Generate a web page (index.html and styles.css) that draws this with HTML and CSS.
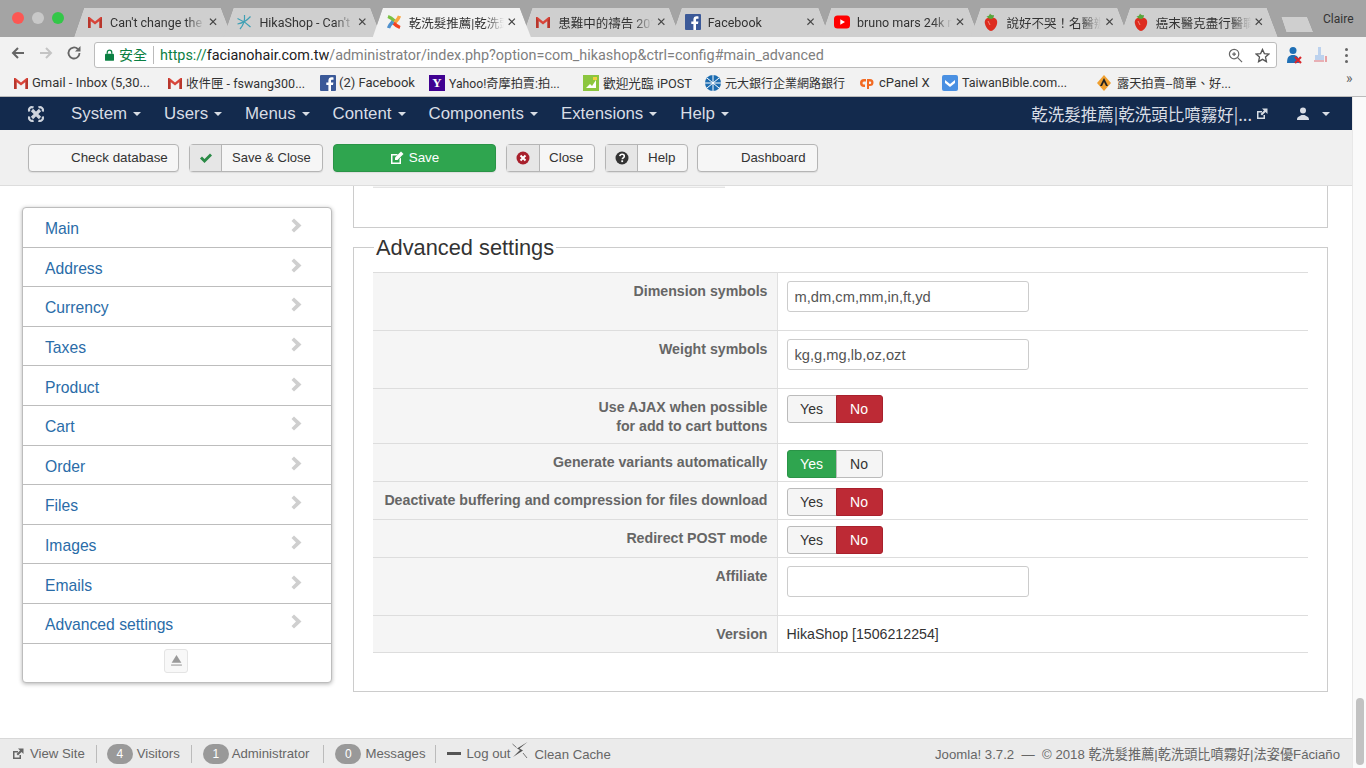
FILE: index.html
```html
<!DOCTYPE html>
<html lang="en">
<head>
<meta charset="utf-8">
<title>HikaShop configuration</title>
<link rel="stylesheet" href="styles.css">
</head>
<body>
<svg class="defs" width="0" height="0" aria-hidden="true">
  <symbol id="gmail" viewBox="0 0 16 16"><path d="M1 3h1.500L8 7.500 13.500 3H15v11h-2.500V7L8 10.500 3.500 7v7H1z" fill="#d8453a"/><path d="M3.500 7v7H1V3z" fill="#b8362c"/><path d="M12.500 7v7H15V3z" fill="#b8362c"/></symbol>
  <symbol id="hika" viewBox="0 0 16 16"><g fill="none" stroke="#3fa0b5" stroke-width="1.200"><path d="M8.500 1C9 6 7.500 11 4 15"/><path d="M1.500 4.500C5 6 10 8.500 14.500 13"/><path d="M14.500 2.500C11 6.500 7 9 1.500 10"/></g></symbol>
  <symbol id="joomla" viewBox="0 0 16 16"><g fill="none" stroke-width="3.400"><path d="M2 2.500C5 3.500 7 5.500 8.500 7" stroke="#7ac143"/><path d="M13.500 2C12.500 5 10.500 7 9 8.500" stroke="#f9a541"/><path d="M14 13.500C11 12.500 9 10.500 7.500 9" stroke="#f44321"/><path d="M2.500 14C3.500 11 5.500 9 7 7.500" stroke="#5091cd"/></g></symbol>
  <symbol id="fb" viewBox="0 0 16 16"><rect width="16" height="16" rx="1" fill="#3b5998"/><path d="M11 16V10h2l.4-2.500H11V6c0-.8.3-1.200 1.200-1.200h1.300V2.500C13 2.400 12.400 2.300 11.600 2.300 9.600 2.300 8.400 3.500 8.400 5.600v1.900H6.300V10h2.100v6z" fill="#fff"/></symbol>
  <symbol id="yt" viewBox="0 0 16 16"><rect y="1.500" width="16" height="13" rx="3.500" fill="#f00"/><path d="M6.300 5.200L11 8l-4.700 2.800z" fill="#fff"/></symbol>
  <symbol id="berry" viewBox="0 0 16 18"><path d="M8 5C12.500 4 15 7 14 11 13 15 10 18 8 18S3 15 2 11C1 7 3.500 4 8 5z" fill="#dd2c1f"/><path d="M5 8l2 4" stroke="#f58a7d" stroke-width="1"/><path d="M8 6C6 6 4 4.500 3.500 3 5.500 3.500 6 3 7 .5 8 2 9 2.500 11 2 11 4 10 6 8 6z" fill="#59a53c"/></symbol>
  <symbol id="chev" viewBox="0 0 11 15"><path d="M3 .5l7.500 7L3 14.500.5 12 5 7.500.5 3z" fill="#cfcfcf"/></symbol>
  <symbol id="ext" viewBox="0 0 12 12"><path d="M1 3h5v1.500H2.500v5h5V7H9v4H1z" fill="currentColor"/><path d="M6 .5h5.500V6L9.500 4 6 7.500 4.500 6 8 2.500z" fill="currentColor"/></symbol>
</svg>

<header class="chrome">
  <div class="tabstrip">
    <div class="lights"><span class="light red"></span><span class="light gray"></span><span class="light green"></span></div>
    <div class="tabs">
      <div class="tab"><div class="tab-in"><svg class="fav"><use href="#gmail"/></svg><span class="tab-t">Can't change the default</span><span class="x">✕</span></div></div>
      <div class="tab"><div class="tab-in"><svg class="fav"><use href="#hika"/></svg><span class="tab-t">HikaShop - Can't change</span><span class="x">✕</span></div></div>
      <div class="tab active"><div class="tab-in"><svg class="fav"><use href="#joomla"/></svg><span class="tab-t">乾洗髮推薦|乾洗頭比噴霧</span><span class="x">✕</span></div></div>
      <div class="tab"><div class="tab-in"><svg class="fav"><use href="#gmail"/></svg><span class="tab-t">患難中的禱告 2018年</span><span class="x">✕</span></div></div>
      <div class="tab"><div class="tab-in"><svg class="fav"><use href="#fb"/></svg><span class="tab-t plain">Facebook</span><span class="x">✕</span></div></div>
      <div class="tab"><div class="tab-in"><svg class="fav"><use href="#yt"/></svg><span class="tab-t">bruno mars 24k magic</span><span class="x">✕</span></div></div>
      <div class="tab"><div class="tab-in"><svg class="fav berry"><use href="#berry"/></svg><span class="tab-t">說好不哭！名醫辦抗癌</span><span class="x">✕</span></div></div>
      <div class="tab"><div class="tab-in"><svg class="fav berry"><use href="#berry"/></svg><span class="tab-t">癌末醫克盡行醫職責</span><span class="x">✕</span></div></div>
      <div class="newtab"></div>
    </div>
    <div class="profile">Claire</div>
  </div>
  <div class="toolbar">
    <svg class="tool" viewBox="0 0 16 16"><path d="M14 8H3M8 3L3 8l5 5" fill="none" stroke="#666" stroke-width="2"/></svg>
    <svg class="tool" viewBox="0 0 16 16"><path d="M2 8h11M8 3l5 5-5 5" fill="none" stroke="#c4c4c4" stroke-width="2"/></svg>
    <svg class="tool" viewBox="0 0 16 16"><path d="M13.500 8A5.500 5.500 0 1 1 11.800 4" fill="none" stroke="#666" stroke-width="1.800"/><path d="M9 6.500h5.500V1z" fill="#666"/></svg>
    <div class="omnibox">
      <svg class="lock" viewBox="0 0 10 13"><path d="M2.500 5V3.500a2.500 2.500 0 0 1 5 0V5" fill="none" stroke="#0b8043" stroke-width="1.400"/><rect y="5" width="10" height="8" rx="1" fill="#0b8043"/></svg>
      <span class="secure">安全</span>
      <span class="url"><span class="scheme">https://</span><span class="host">facianohair.com.tw</span>/administrator/index.php?option=com_hikashop&amp;ctrl=config#main_advanced</span>
      <svg class="omni-i" viewBox="0 0 16 16"><circle cx="6.500" cy="6.500" r="5" fill="none" stroke="#666" stroke-width="1.300"/><path d="M10 10l5 5M4.500 6.500h4M6.500 4.500v4" fill="none" stroke="#666" stroke-width="1.300"/></svg>
      <svg class="omni-i" viewBox="0 0 16 16"><path d="M8 1.500l2 4.500 4.800.5-3.600 3.200 1 4.800L8 12.100 3.800 14.500l1-4.800L1.200 6.500 6 6z" fill="none" stroke="#555" stroke-width="1.400"/></svg>
    </div>
    <svg class="ext ext-a" viewBox="0 0 18 18"><circle cx="8" cy="4.500" r="3.500" fill="#1f6fb5"/><path d="M2 17c0-6 2-8 6-8s6 2 6 8z" fill="#1f6fb5"/><path d="M10 11l6 6m0-6l-6 6" stroke="#d9252a" stroke-width="2.200"/></svg>
    <svg class="ext ext-b" viewBox="0 0 18 18"><path d="M6 1h3v8h3v5H3V9h3z" fill="#bcd2ee"/><path d="M2 15h10" stroke="#e59aa0" stroke-width="1.500"/><path d="M14 10v6" stroke="#e06a70" stroke-width="1.200"/></svg>
    <div class="dots"><i></i><i></i><i></i></div>
  </div>
  <nav class="bookmarks">
    <a class="bm bm1"><svg class="bm-i"><use href="#gmail"/></svg>Gmail - Inbox (5,30...</a>
    <a class="bm bm2"><svg class="bm-i"><use href="#gmail"/></svg>收件匣 - fswang300...</a>
    <a class="bm bm3"><svg class="bm-i"><use href="#fb"/></svg>(2) Facebook</a>
    <a class="bm bm4"><span class="yh">Y</span>Yahoo!奇摩拍賣:拍...</a>
    <a class="bm bm5"><svg class="bm-i" viewBox="0 0 16 16"><rect width="16" height="16" fill="#8cc63f"/><path d="M3 13l4-4 2 2 4-6v8z" fill="#fff"/><rect x="10" y="2" width="4" height="3" fill="#f4d03f"/></svg>歡迎光臨 iPOST</a>
    <a class="bm bm6"><svg class="bm-i" viewBox="0 0 16 16"><circle cx="8" cy="8" r="8" fill="#1c6cb0"/><path d="M8 0v16M0 8h16M2 3l12 10M14 3L2 13" stroke="#fff" stroke-width="1"/></svg>元大銀行企業網路銀行</a>
    <a class="bm bm7"><svg class="bm-i" viewBox="0 0 16 16"><path d="M7 4H5a4 4 0 0 0 0 8h1V9.500H5a1.500 1.500 0 0 1 0-3h2z" fill="#f26a22"/><path d="M8 14V4h3a3.500 3.500 0 0 1 0 7h-1v3zM10 6.500V9h1a1.200 1.200 0 0 0 0-2.500z" fill="#f26a22"/></svg>cPanel X</a>
    <a class="bm bm8"><svg class="bm-i" viewBox="0 0 16 16"><rect width="16" height="16" rx="2" fill="#4a90e2"/><path d="M3 5l5 4 5-4v3l-5 4-5-4z" fill="#fff"/></svg>TaiwanBible.com...</a>
    <a class="bm bm9"><svg class="bm-i" viewBox="0 0 16 16"><path d="M8 0l7 8-7 8-7-8z" fill="#f0a030"/><path d="M8 3L4 11h2l2-4 2 4h2z" fill="#222"/></svg>露天拍賣--簡單、好...</a>
    <span class="more">»</span>
  </nav>
</header>

<div class="app">
  <div class="page">
    <div class="navbar">
      <svg class="logo" viewBox="0 0 18 18"><g fill="none" stroke="#cfd5de"><path d="M5 5l8 8M13 5l-8 8" stroke-width="3.200"/><path d="M2.500 6.500C1 4 3.500 1 6.500 2.500M11.500 2.500C14 1 17 4 15.500 6.500M15.500 11.500C17 14 14 17 11.500 15.500M6.500 15.500C4 17 1 14 2.500 11.500" stroke-width="2.200"/></g></svg>
      <ul class="menu">
        <li>System</li><li>Users</li><li>Menus</li><li>Content</li><li>Components</li><li>Extensions</li><li>Help</li>
      </ul>
      <div class="nav-right">
        <span class="sitename">乾洗髮推薦|乾洗頭比噴霧好|...</span>
        <svg class="nav-ext"><use href="#ext"/></svg>
        <svg class="nav-user" viewBox="0 0 12 13"><circle cx="6" cy="3.500" r="3" fill="#d8dde5"/><path d="M0 13c0-2 .5-3 2-3.500L4.500 8h3L10 9.500c1.500.5 2 1.500 2 3.500z" fill="#d8dde5"/></svg>
        <span class="caret user-caret"></span>
      </div>
    </div>

    <div class="subhead">
      <button class="btn b-check"><span class="lbl">Check database</span></button>
      <button class="btn b-sc"><span class="ic"><svg viewBox="0 0 14 12" class="i14"><path d="M1 6.500l2-2 2.500 2.500L11 1.500l2 2L5.500 11z" fill="#2a8a46"/></svg></span><span class="lbl">Save &amp; Close</span></button>
      <button class="btn b-save"><svg viewBox="0 0 14 14" class="i14"><path d="M1 3h7L6.500 4.500h-4v7h7V8L11 6.500V13H1z" fill="#fff"/><path d="M11 .5l2.500 2.500-6 6H5V6.500z" fill="#fff"/></svg><span>Save</span></button>
      <button class="btn b-close"><span class="ic"><svg viewBox="0 0 14 14" class="i14"><circle cx="7" cy="7" r="6.500" fill="#a8202c"/><path d="M4.500 4.500l5 5m0-5l-5 5" stroke="#fff" stroke-width="2"/></svg></span><span class="lbl">Close</span></button>
      <button class="btn b-help"><span class="ic"><svg viewBox="0 0 14 14" class="i14"><circle cx="7" cy="7" r="6.500" fill="#333"/><path d="M4.800 5.200C5 3.800 6 3.300 7.100 3.300c1.300 0 2.200.8 2.200 1.900 0 1.700-2 1.600-2 3.100" fill="none" stroke="#fff" stroke-width="1.600"/><rect x="6.300" y="9.300" width="1.800" height="1.800" fill="#fff"/></svg></span><span class="lbl">Help</span></button>
      <button class="btn b-dash"><span class="lbl">Dashboard</span></button>
    </div>

    <main class="content">
      <aside class="side">
        <ul class="sidelist">
          <li><a>Main</a><svg class="chev"><use href="#chev"/></svg></li>
          <li><a>Address</a><svg class="chev"><use href="#chev"/></svg></li>
          <li><a>Currency</a><svg class="chev"><use href="#chev"/></svg></li>
          <li><a>Taxes</a><svg class="chev"><use href="#chev"/></svg></li>
          <li><a>Product</a><svg class="chev"><use href="#chev"/></svg></li>
          <li><a>Cart</a><svg class="chev"><use href="#chev"/></svg></li>
          <li><a>Order</a><svg class="chev"><use href="#chev"/></svg></li>
          <li><a>Files</a><svg class="chev"><use href="#chev"/></svg></li>
          <li><a>Images</a><svg class="chev"><use href="#chev"/></svg></li>
          <li><a>Emails</a><svg class="chev"><use href="#chev"/></svg></li>
          <li><a>Advanced settings</a><svg class="chev"><use href="#chev"/></svg></li>
        </ul>
        <div class="side-foot"><span class="eject"><svg viewBox="0 0 12 12" class="eject-i"><path d="M6 1l4.500 7h-9z" fill="#9a9a9a"/><rect x="1" y="9.500" width="10" height="1.500" fill="#bbb"/></svg></span></div>
      </aside>
      <div class="panels">
        <div class="prev-panel"><div class="prev-row"></div></div>
        <fieldset class="panel">
          <legend>Advanced settings</legend>
          <table class="cfg">
            <tr class="r58"><td class="key">Dimension symbols</td><td class="val"><input class="inp" value="m,dm,cm,mm,in,ft,yd"></td></tr>
            <tr class="r58"><td class="key">Weight symbols</td><td class="val"><input class="inp" value="kg,g,mg,lb,oz,ozt"></td></tr>
            <tr class="r55"><td class="key">Use AJAX when possible<br>for add to cart buttons</td><td class="val"><div class="yn"><span class="y">Yes</span><span class="n on-r">No</span></div></td></tr>
            <tr class="r38"><td class="key">Generate variants automatically</td><td class="val"><div class="yn"><span class="y on-g">Yes</span><span class="n">No</span></div></td></tr>
            <tr class="r38"><td class="key">Deactivate buffering and compression for files download</td><td class="val"><div class="yn"><span class="y">Yes</span><span class="n on-r">No</span></div></td></tr>
            <tr class="r38"><td class="key">Redirect POST mode</td><td class="val"><div class="yn"><span class="y">Yes</span><span class="n on-r">No</span></div></td></tr>
            <tr class="r58"><td class="key">Affiliate</td><td class="val"><input class="inp" value=""></td></tr>
            <tr class="r37"><td class="key">Version</td><td class="val txt">HikaShop [1506212254]</td></tr>
          </table>
        </fieldset>
      </div>
    </main>

    <footer class="status">
      <div class="st-left">
        <span class="st st1"><svg class="st-ext"><use href="#ext"/></svg>View Site</span>
        <span class="st st2"><b class="badge">4</b>Visitors</span>
        <span class="st st3"><b class="badge b3">1</b>Administrator</span>
        <span class="st st4"><b class="badge">0</b>Messages</span>
        <span class="st st5"><i class="minus"></i>Log out</span>
        <svg class="bolt" viewBox="0 0 16 17"><path d="M15.500 0L5 6.500 8 8 1 15 11 8.500 7.500 6.500z" fill="#555"/><path d="M11 11l4 5M.5 2l4 3.500" stroke="#777" stroke-width="1"/></svg>
        <span class="clean">Clean Cache</span>
      </div>
      <div class="st-right">Joomla! 3.7.2 &nbsp;—&nbsp; © 2018 乾洗髮推薦|乾洗頭比噴霧好|法姿優Fáciaño</div>
    </footer>
  </div>
  <div class="scrollbar"><div class="thumb"></div></div>
</div>
</body>
</html>
```
FILE: styles.css
```css
* { box-sizing: border-box; }
html, body { margin: 0; height: 100%; overflow: hidden; }
body { width: 1366px; height: 768px; display: flex; flex-direction: column; background: #fff;
  font-family: "Liberation Sans", "Noto Sans CJK TC", sans-serif; color: #333; }
.defs { position: absolute; }
ul { list-style: none; margin: 0; padding: 0; }

/* browser chrome */
.chrome { height: 97px; flex: none; font-family: Roboto, "Noto Sans CJK TC", sans-serif; display: flex; flex-direction: column; }
.tabstrip { height: 37px; background: #a4a4a4; display: flex; padding-top: 8px; position: relative; }
.lights { position: absolute; left: 12px; top: 12px; display: flex; gap: 8px; }
.light { width: 12px; height: 12px; border-radius: 50%; }
.red { background: #fc5753; } .gray { background: #c8c8c8; } .green { background: #33c748; }
.tabs { display: flex; padding-left: 74px; filter: drop-shadow(0 0 .6px #666); }
.tab { width: 158px; margin-right: -8.600px; height: 29px; background: #cfcfcf;
  clip-path: polygon(0 100%, 10px 0, 147px 0, 158px 100%); }
.tab.active { background: #f2f2f2; position: relative; z-index: 2; }
.tab-in { display: flex; align-items: center; height: 28px; padding: 0 14px 0 13px; }
.fav { width: 16px; height: 16px; flex: none; }
.fav.berry { height: 18px; }
.tab-t { font-size: 12.500px; color: #333; margin-left: 7px; width: 95px; white-space: nowrap; overflow: hidden;
  -webkit-mask-image: linear-gradient(to right, #000 80%, transparent); mask-image: linear-gradient(to right, #000 80%, transparent); }
.x { margin-left: auto; font-size: 12px; color: #444; line-height: 1; font-family: "DejaVu Sans", sans-serif; }
.newtab { margin: 9px 0 0 12px; width: 32px; height: 15px; background: #cfcfcf; clip-path: polygon(0 0, 26px 0, 32px 100%, 5px 100%); }
.profile { position: absolute; left: 1323px; top: 12px; font-size: 12px; color: #333; }

.toolbar { height: 31px; background: #f2f2f2; display: flex; align-items: center; padding: 0 0 0 10px; }
.tool { width: 16px; height: 16px; margin-right: 12px; flex: none; }
.omnibox { width: 1183px; height: 26px; background: #fff; border: 1px solid #bcbcbc; border-radius: 3px;
  display: flex; align-items: center; padding: 0 6px 0 7px; margin-top: 5px; }
.lock { width: 9px; height: 12px; flex: none; margin-left: 3px; }
.secure { color: #0b8043; font-size: 14px; margin-left: 5px; padding-right: 6px; border-right: 1px solid #bbb; line-height: 18px; }
.url { font-size: 14.400px; color: #808080; margin-left: 6px; white-space: nowrap; flex: 1; font-family: Roboto, sans-serif; }
.scheme { color: #0b8043; } .host { color: #222; }
.omni-i { width: 15px; height: 15px; margin-left: 12px; flex: none; }
.ext { width: 18px; height: 18px; flex: none; margin-top: 5px; }
.ext-a { margin-left: 8px; } .ext-b { margin-left: 9px; }
.dots { margin-left: 15px; display: flex; flex-direction: column; gap: 3px; margin-top: 5px; }
.dots i { width: 3px; height: 3px; border-radius: 50%; background: #666; display: block; }

.bookmarks { height: 29px; background: #f2f2f2; border-bottom: 1px solid #bbb; display: flex; align-items: center; font-size: 13px; color: #333; padding: 1px 0 0 13px; position: relative; }
.bm { display: flex; align-items: center; white-space: nowrap; gap: 3px; flex: none; }
.bm1 { width: 154px; } .bm2 { width: 153px; font-size: 12.500px; } .bm3 { width: 109px; } .bm4 { width: 154px; font-size: 12.200px; gap: 4px; }
.bm5 { width: 122px; font-size: 12.700px; gap: 4px; } .bm6 { width: 154px; font-size: 12px; gap: 4px; } .bm7 { width: 83px; gap: 4px; }
.bm8 { width: 154px; font-size: 12.500px; gap: 4px; } .bm9 { width: 200px; font-size: 12.200px; gap: 5px; }
.bm-i { width: 16px; height: 16px; flex: none; }
.yh { width: 16px; height: 16px; background: #400191; color: #fff; font-size: 13px; font-weight: 700; text-align: center; line-height: 16px; font-family: "Liberation Serif", serif; }
.more { position: absolute; left: 1346px; top: 2px; font-size: 14px; color: #666; }

/* app */
.app { flex: 1; display: flex; min-height: 0; }
.page { width: 1352px; display: flex; flex-direction: column; }
.scrollbar { width: 14px; background: #fafafa; border-left: 1px solid #e8e8e8; padding: 601px 2px 3px 3px; }
.thumb { height: 67px; background: #c2c2c2; border-radius: 4px; }

.navbar { height: 33px; flex: none; background: #132a4d; display: flex; align-items: center; color: #d8dde5; padding-left: 27px; }
.logo { width: 18px; height: 18px; flex: none; }
.menu { display: flex; margin-left: 26px; font-size: 16.840px; }
.menu li { display: flex; align-items: center; margin-right: 23px; }
.menu li::after { content: ""; margin-left: 6px; border: 4.500px solid transparent; border-top-color: #d8dde5; border-bottom: 0; }
.nav-right { margin-left: auto; display: flex; align-items: center; padding-right: 22px; }
.sitename { font-size: 16.500px; font-family: "Noto Sans CJK TC", sans-serif; }
.nav-ext { width: 12px; height: 12px; margin-left: 4px; color: #d8dde5; }
.nav-user { width: 12px; height: 13px; margin-left: 29px; }
.caret { border: 4.500px solid transparent; border-top-color: #d8dde5; border-bottom: 0; }
.user-caret { margin-left: 13px; }

.subhead { height: 56px; flex: none; background: #f0f0f0; border-bottom: 1px solid #ddd; display: flex; align-items: center; padding: 0 0 0 28px; gap: 10px; }
.btn { height: 28px; background: #f6f6f6; border: 1px solid #b5b5b5; border-radius: 4px; padding: 0; font: 13.400px "Liberation Sans", sans-serif; color: #333; display: flex; align-items: stretch; box-shadow: 0 1px 1px rgba(0,0,0,.08); }
.lbl { align-self: center; }
.ic { background: #e6e6e6; border-right: 1px solid #b5b5b5; display: flex; align-items: center; justify-content: center; flex: none; }
.i14 { width: 14px; height: 14px; }
.b-check { width: 151px; padding-left: 42px; }
.b-sc { width: 134px; } .b-sc .ic { width: 32px; } .b-sc .lbl { margin-left: 10px; font-size: 13px; }
.b-save { width: 163px; background: #2fa54f; border-color: #2a9447; color: #fff; justify-content: center; align-items: center; gap: 5px; }
.b-close { width: 89px; } .b-close .ic { width: 33px; } .b-close .lbl { margin-left: 9px; }
.b-help { width: 83px; } .b-help .ic { width: 32px; } .b-help .lbl { margin-left: 10px; }
.b-dash { width: 121px; padding-left: 43px; margin-left: -1px; font-size: 13.200px; }

.content { flex: 1; display: flex; min-height: 0; overflow: hidden; padding-left: 22px; }
.side { width: 310px; height: 476px; margin-top: 21px; background: #fff; border: 1px solid #bdbdbd; border-radius: 4px; box-shadow: 0 1px 4px rgba(0,0,0,.3); flex: none; }
.sidelist li { height: 39.600px; border-bottom: 1px solid #bdbdbd; display: flex; align-items: center; justify-content: space-between; padding: 0 29px 0 22px; font-size: 15.700px; color: #2a6ca8; }
.sidelist a { padding-top: 4px; }
.chev { width: 11px; height: 15px; margin-top: -3px; }
.side-foot { display: flex; justify-content: center; padding: 5px 2px 0 0; }
.eject { width: 24px; height: 24px; border: 1px solid #e4e4e4; border-radius: 3px; background: #f8f8f8; display: flex; align-items: center; justify-content: center; }
.eject-i { width: 13px; height: 13px; }

.panels { width: 975px; margin-left: 21px; flex: none; }
.prev-panel { height: 42px; border: 1px solid #ccc; border-top: 0; padding: 0 0 0 19px; }
.prev-row { width: 352px; height: 2px; background: #f5f5f5; border-bottom: 1px solid #e4e4e4; }
.panel { margin: 7px 0 0; padding: 0 19px 0; border: 1px solid #ccc; height: 457px; min-width: 0; }
.panel legend { font-size: 21.800px; line-height: 25px; color: #333; padding: 0 2px; margin: 0 0 0 1px; }
.cfg { border-collapse: collapse; width: 935px; margin-top: 12px; font-size: 14.200px; }
.cfg td { padding: 0; border-top: 1px solid #ddd; border-bottom: 1px solid #ddd; vertical-align: top; }
.key { width: 404px; background: #f5f5f5; border-right: 1px solid #e0e0e0; text-align: right; font-weight: 700; color: #666; padding: 9px 9px 0 0 !important; line-height: 19px; }
.val { padding: 8px 0 0 9px !important; }
.r58 { height: 58px; } .r55 { height: 55px; } .r38 { height: 38px; } .r37 { height: 37px; }
.r37 .key, .r37 .val { padding-top: 9px !important; }
.inp { width: 242px; height: 31px; border: 1px solid #ccc; border-radius: 3px; padding: 0 7px; font: 14.700px "Liberation Sans", sans-serif; color: #555; background: #fff; display: block; }
.yn { width: 96px; height: 28px; margin-top: -2px; display: flex; font-size: 14px; }
.y, .n { display: flex; align-items: center; justify-content: center; border: 1px solid #bbb; background: #f5f5f5; color: #333; }
.y { width: 50px; border-radius: 3px 0 0 3px; }
.n { width: 47px; margin-left: -1px; border-radius: 0 3px 3px 0; }
.on-r { background: #bd2a35; border-color: #a8202c; color: #fff; }
.on-g { background: #2fa54f; border-color: #2a9447; color: #fff; }
.txt { line-height: 19px; color: #333; }

.status { height: 30px; flex: none; background: #ebebeb; border-top: 1px solid #d8d8d8; display: flex; align-items: center; justify-content: space-between; font-size: 13.200px; color: #666; padding: 0 12px 0 12px; }
.st-left { display: flex; align-items: center; }
.st { display: flex; align-items: center; height: 18px; border-right: 1px solid #bbb; }
.st1 { padding-right: 11px; } .st2 { padding: 0 11px 0 10px; } .st3 { padding: 0 14px 0 11px; } .st4 { padding: 0 9px 0 11px; } .st5 { padding: 0 0 0 11px; border: 0; }
.st-ext { width: 12px; height: 12px; margin-right: 6px; color: #666; }
.badge { width: 26px; height: 20px; border-radius: 10px; background: #999; color: #fff; font-weight: 400; font-size: 12px; line-height: 20px; text-align: center; margin-right: 4px; }
.badge.b3 { margin-right: 3px; }
.minus { width: 14px; height: 3px; background: #555; margin-right: 6px; }
.bolt { width: 16px; height: 17px; margin: -7px 0 0 1px; }
.clean { margin-left: 7px; padding-top: 2px; }
.st-right { font-size: 13.200px; }
```
